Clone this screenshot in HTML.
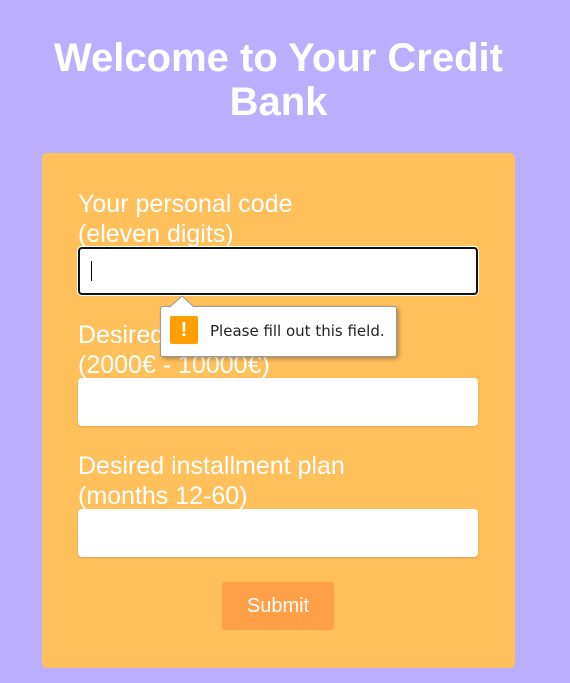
<!DOCTYPE html>
<html><head><meta charset="utf-8"><style>
html,body{margin:0;padding:0}
body{width:570px;height:683px;background:#bbaeff;font-family:"Liberation Sans",Arial,sans-serif;position:relative;overflow:hidden}
h1{position:absolute;left:0;top:36px;width:557px;margin:0;text-align:center;color:#fff;font-size:40px;font-weight:bold;line-height:44px}
.card{position:absolute;left:42px;top:153px;width:473px;height:515px;background:#ffc05c;border-radius:5px}
.lbl{position:absolute;left:78px;color:#fff;font-size:25px;line-height:30px;white-space:nowrap}
.inp{position:absolute;left:78px;width:400px;height:48px;background:#fff;border-radius:4px;box-shadow:0 1px 2px rgba(0,0,0,.15);box-sizing:border-box}
.btn{position:absolute;left:222px;top:582px;width:112px;height:48px;background:#ff9f47;border-radius:3px;color:#fff;font-size:20px;text-align:center;line-height:48px}
.tip{position:absolute;left:160px;top:306px;width:237px;height:51px;background:#fff;border:1px solid #999;border-radius:3px;box-sizing:border-box;box-shadow:2px 2px 4px rgba(0,0,0,.3)}
.ic{position:absolute;left:170px;top:316px;width:28px;height:28px;background:#ffa000;border-radius:2px;color:#fff;font-weight:bold;font-size:20px;text-align:center;line-height:28px}
.tt{position:absolute;left:210px;top:322px;font-family:"DejaVu Sans","Liberation Sans",sans-serif;font-size:15px;color:#222}
</style></head><body>
<h1>Welcome to Your Credit<br>Bank</h1>
<div class="card"></div>
<div class="lbl" style="top:189px">Your personal code<br>(eleven digits)</div>
<div class="inp" style="top:247px;border:2px solid #111;box-shadow:0 0 0 1px #fff"><div style="position:absolute;left:11px;top:12px;width:1px;height:20px;background:#000"></div></div>
<div class="lbl" style="top:320px">Desired loan amount<br>(2000€ - 10000€)</div>
<div class="inp" style="top:378px"></div>
<div class="lbl" style="top:451px">Desired installment plan<br>(months 12-60)</div>
<div class="inp" style="top:509px"></div>
<div class="btn">Submit</div>
<div class="tip"></div>
<svg style="position:absolute;left:170px;top:295px" width="26" height="13"><path d="M0 12 L12 1 L24 12" fill="#fff" stroke="#999" stroke-width="1"/><rect x="1" y="12" width="23" height="2" fill="#fff"/></svg>
<div class="ic">!</div>
<div class="tt">Please fill out this field.</div>
</body></html>
